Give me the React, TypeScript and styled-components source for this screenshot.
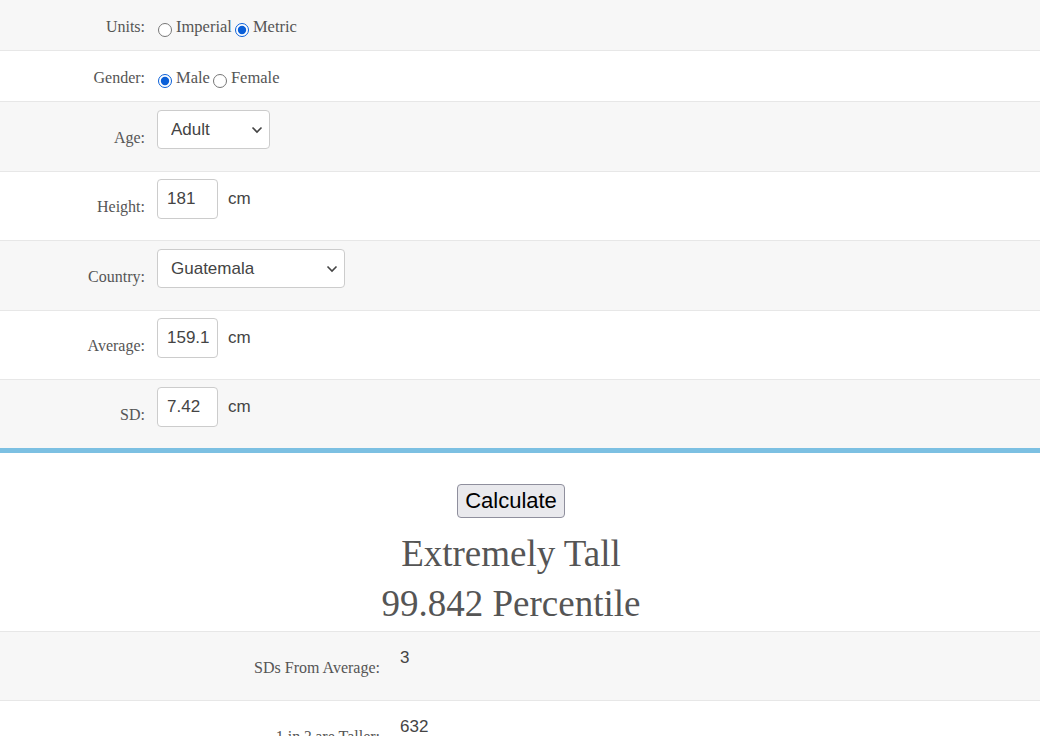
import React from 'react'
import styled, { createGlobalStyle } from 'styled-components'

const GlobalStyle = createGlobalStyle`
  *, *::before, *::after {
    box-sizing: border-box;
  }
  body {
    margin: 0;
    background: #ffffff;
    font-family: 'Liberation Serif', serif;
  }
`

type Tone = 'grey' | 'white'

const FormTable = styled.div`
  display: flex;
  flex-direction: column;
  border-bottom: 5px solid #7cc0e2;
`

const Row = styled.div<{ $tone: Tone; $height: number; $last?: boolean }>`
  display: flex;
  height: ${(p) => p.$height}px;
  background: ${(p) => (p.$tone === 'grey' ? '#f7f7f7' : '#ffffff')};
  border-bottom: ${(p) => (p.$last ? 'none' : '1px solid #e7e7e7')};
`

const Label = styled.div<{ $width: number; $shift?: number }>`
  width: ${(p) => p.$width}px;
  flex-shrink: 0;
  align-self: center;
  padding-top: ${(p) => p.$shift || 0}px;
  text-align: right;
  font-family: 'Liberation Serif', serif;
  font-size: 16px;
  color: #555555;
`

const Field = styled.div<{ $top?: number; $center?: boolean; $pad?: number }>`
  display: flex;
  align-items: center;
  align-self: ${(p) => (p.$center ? 'center' : 'flex-start')};
  padding-left: ${(p) => (p.$pad === undefined ? 12 : p.$pad)}px;
  padding-top: ${(p) => p.$top || 0}px;
`

const RadioOption = styled.label`
  display: flex;
  align-items: center;
  font-family: 'Liberation Serif', serif;
  font-size: 16.5px;
  color: #555555;
`

const Radio = styled.input.attrs({ type: 'radio' })`
  width: 14px;
  height: 14px;
  margin: 7px 4px 0 3px;
  accent-color: #0a5fd8;
`

const TextInput = styled.input`
  width: 61px;
  height: 40px;
  padding: 0 0 0 9px;
  border: 1px solid #cccccc;
  border-radius: 4px;
  font-family: 'Liberation Sans', Arial, sans-serif;
  font-size: 17px;
  color: #444444;
  background: #ffffff;
  outline: none;
`

const Unit = styled.span`
  margin-left: 10px;
  font-family: 'Liberation Sans', Arial, sans-serif;
  font-size: 17px;
  color: #444444;
`

const SelectWrap = styled.div`
  position: relative;
  display: flex;
`

const Select = styled.select<{ $width: number }>`
  appearance: none;
  width: ${(p) => p.$width}px;
  height: 39px;
  padding: 0 0 0 13px;
  border: 1px solid #cccccc;
  border-radius: 4px;
  font-family: 'Liberation Sans', Arial, sans-serif;
  font-size: 17px;
  color: #444444;
  background: #ffffff;
  outline: none;
`

const Chevron = styled.svg`
  position: absolute;
  right: 7px;
  top: 16px;
  pointer-events: none;
`

const ResultSection = styled.div`
  display: flex;
  flex-direction: column;
  align-items: center;
  padding: 31px 18px 2px 0;
  border-bottom: 1px solid #e7e7e7;
`

const CalcButton = styled.button`
  height: 34px;
  padding: 0 7px;
  font-family: 'Liberation Sans', Arial, sans-serif;
  font-size: 22px;
  color: #000000;
  background: #e9e9ed;
  border: 1px solid #8f8f9d;
  border-radius: 4px;
  margin-bottom: 11px;
`

const Verdict = styled.div`
  font-family: 'Liberation Serif', serif;
  font-size: 37px;
  line-height: 50px;
  color: #555555;
  text-align: center;
`

const Value = styled.div`
  padding-left: 20px;
  padding-top: 16px;
  font-family: 'Liberation Sans', Arial, sans-serif;
  font-size: 17px;
  color: #444444;
`

const ChevronIcon = () => (
  <Chevron width="12" height="8" viewBox="0 0 12 8">
    <path d="M1.5 1.5 L6 6 L10.5 1.5" fill="none" stroke="#444" strokeWidth="1.6" />
  </Chevron>
)

const LABEL_W = 145

const App: React.FC = () => {
  return (
    <>
      <GlobalStyle />
      <FormTable>
        <Row $tone="grey" $height={51}>
          <Label $width={LABEL_W} $shift={3}>Units:</Label>
          <Field $center $top={3} $pad={10}>
            <RadioOption>
              <Radio name="units" />
              Imperial
            </RadioOption>
            <RadioOption>
              <Radio name="units" defaultChecked />
              Metric
            </RadioOption>
          </Field>
        </Row>
        <Row $tone="white" $height={51}>
          <Label $width={LABEL_W} $shift={3}>Gender:</Label>
          <Field $center $top={3} $pad={10}>
            <RadioOption>
              <Radio name="gender" defaultChecked />
              Male
            </RadioOption>
            <RadioOption>
              <Radio name="gender" />
              Female
            </RadioOption>
          </Field>
        </Row>
        <Row $tone="grey" $height={70}>
          <Label $width={LABEL_W} $shift={2}>Age:</Label>
          <Field $top={8}>
            <SelectWrap>
              <Select $width={113} defaultValue="Adult">
                <option>Adult</option>
                <option>Child</option>
              </Select>
              <ChevronIcon />
            </SelectWrap>
          </Field>
        </Row>
        <Row $tone="white" $height={69}>
          <Label $width={LABEL_W} $shift={2}>Height:</Label>
          <Field $top={7}>
            <TextInput defaultValue="181" />
            <Unit>cm</Unit>
          </Field>
        </Row>
        <Row $tone="grey" $height={70}>
          <Label $width={LABEL_W} $shift={2}>Country:</Label>
          <Field $top={8}>
            <SelectWrap>
              <Select $width={188} defaultValue="Guatemala">
                <option>Guatemala</option>
                <option>Guyana</option>
              </Select>
              <ChevronIcon />
            </SelectWrap>
          </Field>
        </Row>
        <Row $tone="white" $height={69}>
          <Label $width={LABEL_W} $shift={2}>Average:</Label>
          <Field $top={7}>
            <TextInput defaultValue="159.1" />
            <Unit>cm</Unit>
          </Field>
        </Row>
        <Row $tone="grey" $height={68} $last>
          <Label $width={LABEL_W} $shift={2}>SD:</Label>
          <Field $top={7}>
            <TextInput defaultValue="7.42" />
            <Unit>cm</Unit>
          </Field>
        </Row>
      </FormTable>
      <ResultSection>
        <CalcButton>Calculate</CalcButton>
        <Verdict>Extremely Tall</Verdict>
        <Verdict>99.842 Percentile</Verdict>
      </ResultSection>
      <Row $tone="grey" $height={69}>
        <Label $width={380} $shift={3}>SDs From Average:</Label>
        <Value>3</Value>
      </Row>
      <Row $tone="white" $height={69}>
        <Label $width={380} $shift={3}>1 in ? are Taller:</Label>
        <Value>632</Value>
      </Row>
    </>
  )
}

export default App
